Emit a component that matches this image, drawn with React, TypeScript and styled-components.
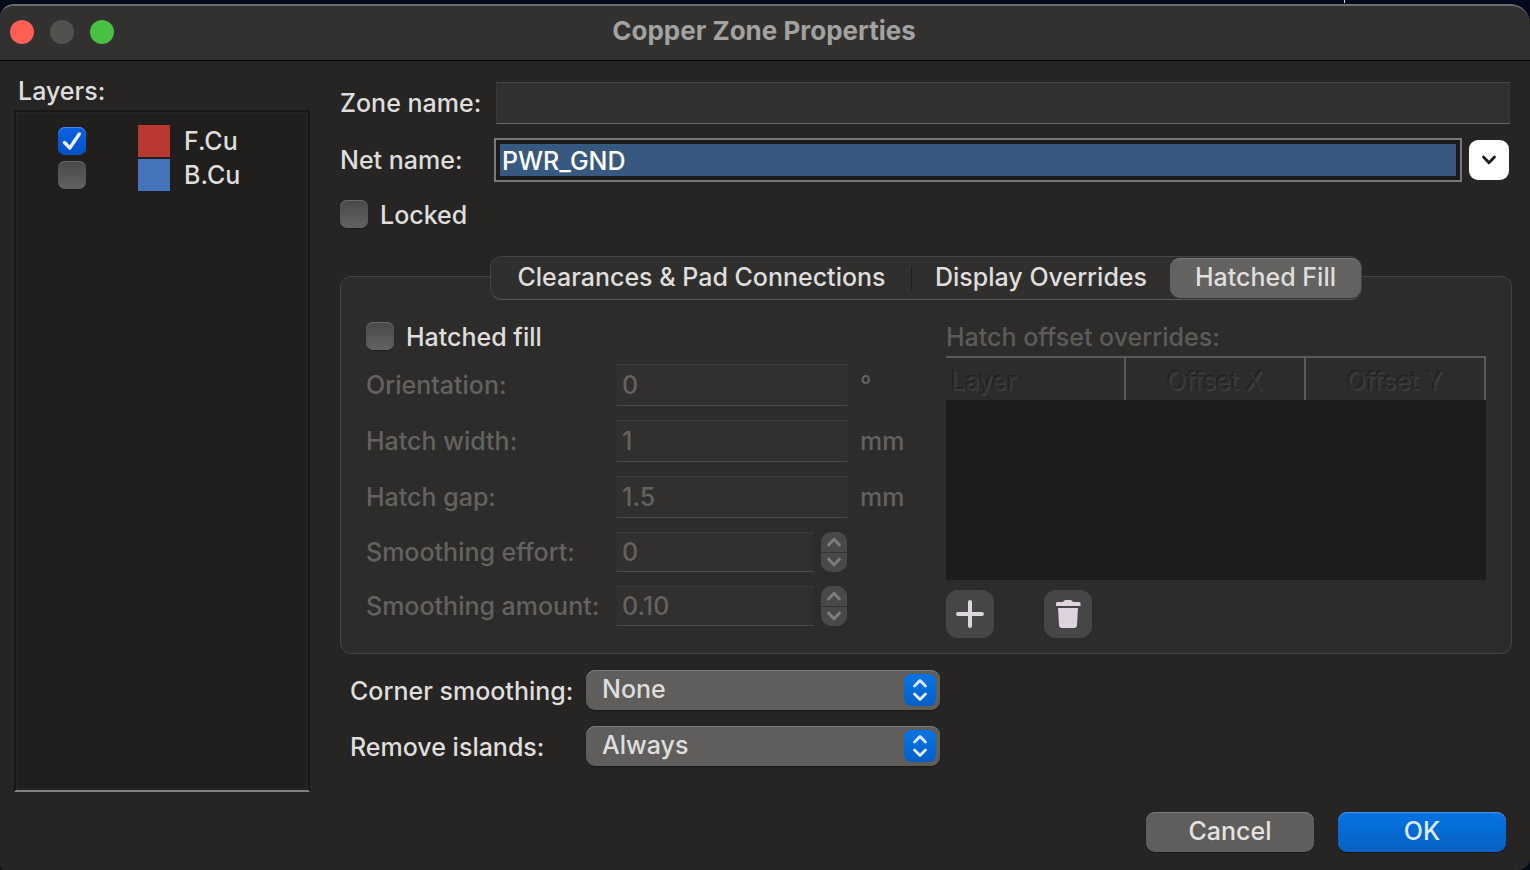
import React, { useState } from "react";
import styled, { createGlobalStyle, css } from "styled-components";

const GlobalStyle = createGlobalStyle`
  *, *::before, *::after { box-sizing: border-box; }
  body {
    margin: 0;
    background: #020a1c;
    font-family: Inter, "Liberation Sans", sans-serif;
    font-size: 25px;
    font-weight: 500;
    line-height: 32px;
    color: #dfdedc;
  }
  button, input, select { font: inherit; color: inherit; margin: 0; }
`;

const Desktop = styled.div`
  position: relative;
  display: flex;
  flex-direction: column;
  min-height: 100vh;
  padding-top: 4px;
`;

const DesktopMark = styled.span`
  position: absolute;
  top: 0;
  right: 185px;
  width: 1px;
  height: 3px;
  background: #d8dce2;
`;

const Window = styled.main`
  flex: 1;
  display: flex;
  flex-direction: column;
  background: #262524;
  border-top: 2px solid #6c6e6c;
  border-radius: 14px 20px 12px 4px;
  overflow: hidden;
`;

const TitleBar = styled.header`
  display: grid;
  grid-template-columns: 1fr auto 1fr;
  align-items: center;
  height: 55px;
  padding: 0 12px 2px 10px;
  background: #32312f;
  border-bottom: 1px solid #000;
`;

const Lights = styled.div`
  display: flex;
  gap: 16px;
`;

const Light = styled.button<{ $color: string }>`
  width: 24px;
  height: 24px;
  padding: 0;
  border: 0;
  border-radius: 50%;
  background: ${(p) => p.$color};
`;

const Title = styled.h1`
  margin: 0;
  padding-bottom: 2px;
  font-size: 26px;
  font-weight: 700;
  color: #a3a2a0;
`;

const Content = styled.div`
  flex: 1;
  display: grid;
  grid-template-columns: 296px minmax(0, 1fr);
  column-gap: 30px;
  padding: 14px 18px 0 14px;
`;

const LayersPane = styled.section`
  display: flex;
  flex-direction: column;
`;

const LayersTitle = styled.h2`
  margin: 0;
  padding: 0 4px 3px;
  font-size: 25px;
  font-weight: 500;
`;

const LayerList = styled.ul`
  flex: 1;
  margin: 0;
  padding: 13px 0 0 42px;
  list-style: none;
  background: #201f1e;
  border: 2px solid #171716;
  border-bottom-color: #838280;
  box-shadow: inset 0 0 0 2px #252423;
`;

const LayerItem = styled.li`
  display: flex;
  align-items: center;
  height: 34px;
  padding-bottom: 2px;
`;

const LayerLabel = styled.label`
  display: flex;
  align-items: center;
  gap: 14px;
  margin-left: 52px;
`;

const Swatch = styled.span<{ $color: string }>`
  width: 32px;
  height: 32px;
  background: ${(p) => p.$color};
`;

const CheckWrap = styled.span`
  position: relative;
  display: block;
  width: 28px;
  height: 28px;
  svg {
    position: absolute;
    inset: 0;
    pointer-events: none;
  }
`;

const CheckInput = styled.input`
  display: block;
  appearance: none;
  width: 28px;
  height: 28px;
  border-radius: 7px;
  background: linear-gradient(#4a4947, #636260);
  box-shadow: inset 0 1px 0 #6b6a68, 0 1px 1px #1c1b1a;
  &:checked {
    background: linear-gradient(#0a62e0, #0453c6);
    box-shadow: inset 0 1px 0 #4b8bea;
  }
`;

const Form = styled.form`
  display: flex;
  flex-direction: column;
`;

const NameRow = styled.div`
  display: grid;
  grid-template-columns: 154px minmax(0, 1fr);
  align-items: center;
  padding-right: 2px;
`;

const NameRows = styled.div`
  display: grid;
  gap: 14px;
  padding-top: 7px;
`;

const fieldLook = css`
  background: #31302f;
  border: 1px solid #393837;
  border-top-color: #454442;
  border-bottom-color: #6a6967;
  border-radius: 0;
  outline: none;
`;

const ZoneInput = styled.input`
  ${fieldLook}
  height: 42px;
  margin-left: 2px;
  padding: 0 6px;
`;

const Combo = styled.div`
  display: flex;
  align-items: center;
  gap: 7px;
  padding-right: 1px;
`;

const ComboBox = styled.div`
  flex: 1;
  padding: 4px;
  border: 2px solid #7a7977;
  background: #1b1b1a;
`;

const ComboInput = styled.input`
  display: block;
  width: 100%;
  height: 32px;
  padding: 1px 2px 0;
  border: 0;
  border-radius: 0;
  outline: none;
  background: #38597f;
  color: #fff;
`;

const ComboButton = styled.button`
  display: grid;
  place-items: center;
  width: 40px;
  height: 40px;
  padding: 0;
  border: 0;
  border-radius: 9px;
  background: #fff;
`;

const CheckLabel = styled.label`
  display: flex;
  align-items: center;
  gap: 12px;
  height: 28px;
`;

const CheckText = styled.span`
  padding-top: 2px;
`;

const LockedRow = styled.div`
  padding: 18px 0 28px;
`;

const TabBar = styled.div`
  position: relative;
  z-index: 1;
  align-self: center;
  display: flex;
  height: 44px;
  padding: 1px 0;
  margin-bottom: -24px;
  background: #302f2e;
  border: 1px solid #434240;
  border-bottom-color: #595856;
  border-radius: 12px;
`;

const Tab = styled.button<{ $width: number; $active?: boolean; $divided?: boolean }>`
  position: relative;
  width: ${(p) => p.$width}px;
  padding: 0 0 2px;
  border: 0;
  border-radius: 10px;
  background: ${(p) => (p.$active ? "#636261" : "transparent")};
  box-shadow: ${(p) => (p.$active ? "inset 0 1px 0 #7b7a78" : "none")};
  white-space: nowrap;
  ${(p) =>
    p.$divided &&
    css`
      &::after {
        content: "";
        position: absolute;
        right: 0;
        top: 8px;
        bottom: 8px;
        width: 1px;
        background: #1f1e1d;
      }
    `}
`;

const Panel = styled.section`
  display: grid;
  grid-template-columns: 580px minmax(0, 1fr);
  padding: 45px 25px 15px;
  background: #2d2c2b;
  border: 1px solid #454442;
  border-radius: 11px;
`;

const HatchFields = styled.div`
  display: flex;
  flex-direction: column;
  gap: 14px;
`;

const FieldRow = styled.div`
  display: grid;
  grid-template-columns: 250px 232px auto;
  align-items: center;
  justify-content: start;
  color: #636260;
`;

const HatchInput = styled.input<{ $short?: boolean }>`
  ${fieldLook}
  display: block;
  flex: 1;
  min-width: 0;
  width: 100%;
  height: ${(p) => (p.$short ? 40 : 42)}px;
  padding: 0 5px;
  border-color: #2f2e2d;
  border-top-color: #3b3a39;
  border-bottom-color: #4c4b4a;
`;

const Unit = styled.span`
  padding-left: 12px;
`;

const SpinField = styled.div`
  display: flex;
  gap: 7px;
  padding-right: 1px;
`;

const Stepper = styled.div`
  display: grid;
  grid-template-rows: 1fr 1fr;
  row-gap: 1px;
  width: 26px;
  height: 40px;
  border-radius: 10px;
  overflow: hidden;
  background: #333231;
`;

const StepButton = styled.button`
  display: grid;
  place-items: center;
  padding: 0;
  border: 0;
  background: #4a4948;
`;

const Overrides = styled.div`
  display: flex;
  flex-direction: column;
`;

const OverridesTitle = styled.h3`
  margin: 0 0 4px;
  font-size: 25px;
  font-weight: 500;
  line-height: 30px;
  color: #5c5b59;
`;

const OffsetTable = styled.table`
  width: 100%;
  table-layout: fixed;
  border-collapse: separate;
  border-spacing: 0;
  border-top: 2px solid #5b5a59;
`;

const HeadCell = styled.th<{ $left?: boolean }>`
  height: 42px;
  padding: 4px 5px 0;
  background: #2c2c2c;
  border-right: 2px solid #5b5a59;
  font-weight: 400;
  text-align: ${(p) => (p.$left ? "left" : "center")};
  color: #303030;
  text-shadow: -1px -1px 0 #1e1e1e, 1px 1px 0 #434343;
`;

const EmptyCell = styled.td`
  height: 180px;
  padding: 0;
  background: #1d1d1d;
`;

const TableActions = styled.div`
  display: flex;
  gap: 50px;
  padding-top: 10px;
`;

const IconButton = styled.button`
  display: grid;
  place-items: center;
  width: 48px;
  height: 48px;
  padding: 0;
  border: 0;
  border-radius: 12px;
  background: #474646;
`;

const ChoiceRows = styled.div`
  display: grid;
  gap: 16px;
  padding: 16px 10px 0;
`;

const ChoiceRow = styled.div`
  display: grid;
  grid-template-columns: 236px 354px;
  align-items: center;
`;

const ChoiceLabel = styled.label`
  padding-top: 2px;
`;

const SelectWrap = styled.div`
  position: relative;
  svg {
    position: absolute;
    right: 4px;
    top: 4px;
    pointer-events: none;
  }
`;

const Select = styled.select`
  display: block;
  appearance: none;
  width: 100%;
  height: 40px;
  padding: 0 44px 2px 16px;
  border: 0;
  border-radius: 9px;
  outline: none;
  background: #5f5e5c;
  box-shadow: inset 0 1px 0 #7b7a78, 0 1px 1px #191817;
`;

const Footer = styled.footer`
  display: flex;
  justify-content: flex-end;
  gap: 24px;
  padding: 20px 24px 18px;
`;

const DialogButton = styled.button<{ $primary?: boolean }>`
  width: 168px;
  height: 40px;
  padding: 0 0 2px;
  border: 0;
  border-radius: 9px;
  background: ${(p) => (p.$primary ? "linear-gradient(#0473e2, #0561c4)" : "#5f5e5c")};
  box-shadow: inset 0 1px 0 ${(p) => (p.$primary ? "#4896e8" : "#7b7a78")}, 0 1px 1px #191817;
  color: ${(p) => (p.$primary ? "#dcecfb" : "#e4e3e1")};
`;

const Chevron = ({ up, color }: { up?: boolean; color: string }) => (
  <svg width="16" height="10" viewBox="0 0 16 10" fill="none" aria-hidden="true">
    <path
      d={up ? "M2.5 8 L8 2.2 L13.5 8" : "M2.5 2 L8 7.8 L13.5 2"}
      stroke={color}
      strokeWidth="2.8"
      strokeLinecap="round"
      strokeLinejoin="round"
    />
  </svg>
);

const PopupArrows = () => (
  <svg width="32" height="32" viewBox="0 0 32 32" fill="none" aria-hidden="true">
    <defs>
      <linearGradient id="popup" x1="0" y1="0" x2="0" y2="1">
        <stop offset="0" stopColor="#0a74e4" />
        <stop offset="1" stopColor="#0461c6" />
      </linearGradient>
    </defs>
    <rect width="32" height="32" rx="7" fill="url(#popup)" />
    <path
      d="M10.5 12 L16 6.5 L21.5 12 M10.5 20 L16 25.5 L21.5 20"
      stroke="#e6f1fc"
      strokeWidth="2.8"
      strokeLinecap="round"
      strokeLinejoin="round"
    />
  </svg>
);

type CheckProps = { id: string; initial?: boolean };

const Checkbox = ({ id, initial = false }: CheckProps) => {
  const [on, setOn] = useState(initial);
  return (
    <CheckWrap>
      <CheckInput id={id} type="checkbox" checked={on} onChange={() => setOn(!on)} />
      {on && (
        <svg width="28" height="28" viewBox="0 0 28 28" fill="none" aria-hidden="true">
          <path
            d="M6.5 15.5 L11.8 21 L21.3 7"
            stroke="#e8f1fd"
            strokeWidth="3.4"
            strokeLinecap="round"
            strokeLinejoin="round"
          />
        </svg>
      )}
    </CheckWrap>
  );
};

const layers = [
  { id: "f-cu", name: "F.Cu", color: "#b93832", on: true },
  { id: "b-cu", name: "B.Cu", color: "#4474b9", on: false },
];

const measures = [
  { id: "orientation", label: "Orientation:", value: "0", unit: "°" },
  { id: "hatch-width", label: "Hatch width:", value: "1", unit: "mm" },
  { id: "hatch-gap", label: "Hatch gap:", value: "1.5", unit: "mm" },
];

const spinners = [
  { id: "effort", label: "Smoothing effort:", value: "0" },
  { id: "amount", label: "Smoothing amount:", value: "0.10" },
];

export default function App() {
  return (
    <>
      <GlobalStyle />
      <Desktop>
        <DesktopMark />
        <Window>
          <TitleBar>
            <Lights>
              <Light type="button" aria-label="Close" $color="#fc5f56" />
              <Light type="button" aria-label="Minimize" $color="#52514f" disabled />
              <Light type="button" aria-label="Zoom" $color="#48c044" />
            </Lights>
            <Title>Copper Zone Properties</Title>
          </TitleBar>

          <Content>
            <LayersPane>
              <LayersTitle>Layers:</LayersTitle>
              <LayerList>
                {layers.map((l) => (
                  <LayerItem key={l.id}>
                    <Checkbox id={l.id} initial={l.on} />
                    <LayerLabel htmlFor={l.id}>
                      <Swatch $color={l.color} />
                      {l.name}
                    </LayerLabel>
                  </LayerItem>
                ))}
              </LayerList>
            </LayersPane>

            <Form id="zone-form" onSubmit={(e) => e.preventDefault()}>
              <NameRows>
                <NameRow>
                  <label htmlFor="zone-name">Zone name:</label>
                  <ZoneInput id="zone-name" type="text" />
                </NameRow>
                <NameRow>
                  <label htmlFor="net-name">Net name:</label>
                  <Combo>
                    <ComboBox>
                      <ComboInput id="net-name" type="text" defaultValue="PWR_GND" />
                    </ComboBox>
                    <ComboButton type="button" aria-label="Show nets">
                      <Chevron color="#1d1d1d" />
                    </ComboButton>
                  </Combo>
                </NameRow>
              </NameRows>

              <LockedRow>
                <CheckLabel htmlFor="locked">
                  <Checkbox id="locked" />
                  <CheckText>Locked</CheckText>
                </CheckLabel>
              </LockedRow>

              <TabBar role="tablist">
                <Tab type="button" role="tab" $width={421} $divided>
                  Clearances &amp; Pad Connections
                </Tab>
                <Tab type="button" role="tab" $width={258}>
                  Display Overrides
                </Tab>
                <Tab type="button" role="tab" aria-selected="true" $width={191} $active>
                  Hatched Fill
                </Tab>
              </TabBar>

              <Panel role="tabpanel">
                <HatchFields>
                  <CheckLabel htmlFor="hatched">
                    <Checkbox id="hatched" />
                    <CheckText>Hatched fill</CheckText>
                  </CheckLabel>
                  {measures.map((m) => (
                    <FieldRow key={m.id}>
                      <label htmlFor={m.id}>{m.label}</label>
                      <HatchInput id={m.id} type="text" defaultValue={m.value} disabled />
                      <Unit>{m.unit}</Unit>
                    </FieldRow>
                  ))}
                  {spinners.map((s) => (
                    <FieldRow key={s.id}>
                      <label htmlFor={s.id}>{s.label}</label>
                      <SpinField>
                        <HatchInput id={s.id} type="text" defaultValue={s.value} disabled $short />
                        <Stepper>
                          <StepButton type="button" aria-label="Increase" disabled>
                            <Chevron up color="#7f7e7c" />
                          </StepButton>
                          <StepButton type="button" aria-label="Decrease" disabled>
                            <Chevron color="#7f7e7c" />
                          </StepButton>
                        </Stepper>
                      </SpinField>
                    </FieldRow>
                  ))}
                </HatchFields>

                <Overrides>
                  <OverridesTitle>Hatch offset overrides:</OverridesTitle>
                  <OffsetTable>
                    <thead>
                      <tr>
                        <HeadCell $left>Layer</HeadCell>
                        <HeadCell>Offset X</HeadCell>
                        <HeadCell>Offset Y</HeadCell>
                      </tr>
                    </thead>
                    <tbody>
                      <tr>
                        <EmptyCell colSpan={3} />
                      </tr>
                    </tbody>
                  </OffsetTable>
                  <TableActions>
                    <IconButton type="button" aria-label="Add override">
                      <svg width="28" height="28" viewBox="0 0 28 28" fill="none" aria-hidden="true">
                        <path d="M14 2 V26 M2 14 H26" stroke="#ded6de" strokeWidth="4" strokeLinecap="round" />
                      </svg>
                    </IconButton>
                    <IconButton type="button" aria-label="Delete override">
                      <svg width="28" height="28" viewBox="0 0 28 28" fill="#ded3de" aria-hidden="true">
                        <path d="M3 2 H9 Q10 0 11.5 0 H16.5 Q18 0 19 2 H25 Q26.5 2 26.5 3.5 V6 H2 V3.5 Q2 2 3 2 Z" />
                        <path d="M4 8 H24 L23 25 Q22.8 28 20 28 H8 Q5.2 28 5 25 Z" />
                      </svg>
                    </IconButton>
                  </TableActions>
                </Overrides>
              </Panel>

              <ChoiceRows>
                <ChoiceRow>
                  <ChoiceLabel htmlFor="corner">Corner smoothing:</ChoiceLabel>
                  <SelectWrap>
                    <Select id="corner" defaultValue="None">
                      <option>None</option>
                      <option>Chamfer</option>
                      <option>Fillet</option>
                    </Select>
                    <PopupArrows />
                  </SelectWrap>
                </ChoiceRow>
                <ChoiceRow>
                  <ChoiceLabel htmlFor="islands">Remove islands:</ChoiceLabel>
                  <SelectWrap>
                    <Select id="islands" defaultValue="Always">
                      <option>Always</option>
                      <option>Never</option>
                      <option>Below area limit</option>
                    </Select>
                    <PopupArrows />
                  </SelectWrap>
                </ChoiceRow>
              </ChoiceRows>
            </Form>
          </Content>

          <Footer>
            <DialogButton type="button">Cancel</DialogButton>
            <DialogButton type="submit" form="zone-form" $primary>
              OK
            </DialogButton>
          </Footer>
        </Window>
      </Desktop>
    </>
  );
}
